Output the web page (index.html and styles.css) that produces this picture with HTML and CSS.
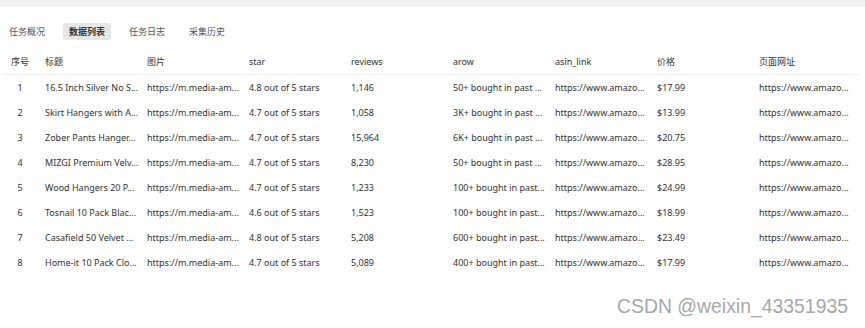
FILE: index.html
```html
<!DOCTYPE html>
<html lang="zh">
<head>
<meta charset="utf-8">
<link rel="stylesheet" href="styles.css">
</head>
<body>
<div class="topbar"></div>
<div class="tabs">
  <span class="tab">任务概况</span>
  <span class="tab active">数据列表</span>
  <span class="tab">任务日志</span>
  <span class="tab">采集历史</span>
</div>
<table class="grid">
  <colgroup>
    <col class="c-idx"><col class="c"><col class="c"><col class="c"><col class="c"><col class="c"><col class="c"><col class="c"><col>
  </colgroup>
  <thead>
    <tr><th class="idx">序号</th><th>标题</th><th>图片</th><th>star</th><th>reviews</th><th>arow</th><th>asin_link</th><th>价格</th><th>页面网址</th></tr>
  </thead>
  <tbody>
    <tr><td class="idx">1</td><td>16.5 Inch Silver No S...</td><td>https://m.media-am...</td><td>4.8 out of 5 stars</td><td>1,146</td><td>50+ bought in past ...</td><td>https://www.amazo...</td><td>$17.99</td><td>https://www.amazo...</td></tr>
    <tr><td class="idx">2</td><td>Skirt Hangers with A...</td><td>https://m.media-am...</td><td>4.7 out of 5 stars</td><td>1,058</td><td>3K+ bought in past ...</td><td>https://www.amazo...</td><td>$13.99</td><td>https://www.amazo...</td></tr>
    <tr><td class="idx">3</td><td>Zober Pants Hanger...</td><td>https://m.media-am...</td><td>4.7 out of 5 stars</td><td>15,964</td><td>6K+ bought in past ...</td><td>https://www.amazo...</td><td>$20.75</td><td>https://www.amazo...</td></tr>
    <tr><td class="idx">4</td><td>MIZGI Premium Velv...</td><td>https://m.media-am...</td><td>4.7 out of 5 stars</td><td>8,230</td><td>50+ bought in past ...</td><td>https://www.amazo...</td><td>$28.95</td><td>https://www.amazo...</td></tr>
    <tr><td class="idx">5</td><td>Wood Hangers 20 P...</td><td>https://m.media-am...</td><td>4.7 out of 5 stars</td><td>1,233</td><td>100+ bought in past...</td><td>https://www.amazo...</td><td>$24.99</td><td>https://www.amazo...</td></tr>
    <tr><td class="idx">6</td><td>Tosnail 10 Pack Blac...</td><td>https://m.media-am...</td><td>4.6 out of 5 stars</td><td>1,523</td><td>100+ bought in past...</td><td>https://www.amazo...</td><td>$18.99</td><td>https://www.amazo...</td></tr>
    <tr><td class="idx">7</td><td>Casafield 50 Velvet ...</td><td>https://m.media-am...</td><td>4.8 out of 5 stars</td><td>5,208</td><td>600+ bought in past...</td><td>https://www.amazo...</td><td>$23.49</td><td>https://www.amazo...</td></tr>
    <tr><td class="idx">8</td><td>Home-it 10 Pack Clo...</td><td>https://m.media-am...</td><td>4.7 out of 5 stars</td><td>5,089</td><td>400+ bought in past...</td><td>https://www.amazo...</td><td>$17.99</td><td>https://www.amazo...</td></tr>
  </tbody>
</table>
<div class="watermark">CSDN @weixin_43351935</div>
</body>
</html>
```
FILE: styles.css
```css
html, body {
  margin: 0;
  padding: 0;
  background: #ffffff;
}
body {
  position: relative;
  width: 865px;
  height: 328px;
  overflow: hidden;
  font-family: "Noto Sans", "Noto Sans CJK SC", sans-serif;
  font-size: 9px;
  color: #333333;
}
.topbar {
  height: 7px;
  background: #f2f2f2;
}
.tabs {
  display: flex;
  gap: 12px;
  padding: 16px 0 0 3px;
}
.tab {
  width: 48px;
  height: 17px;
  line-height: 17px;
  text-align: center;
  border-radius: 3px;
  color: #555555;
}
.tab.active {
  background: #e6e6e6;
  color: #333333;
  font-weight: 600;
}
.grid {
  margin: 8px 0 0 3px;
  width: 857px;
  border-collapse: collapse;
  table-layout: fixed;
}
.grid col.c-idx {
  width: 34px;
}
.grid col.c {
  width: 102px;
}
.grid th,
.grid td {
  padding: 0 0 0 8px;
  text-align: left;
  white-space: nowrap;
  overflow: hidden;
  font-weight: 400;
}
.grid th {
  height: 26px;
  color: #333333;
  border-bottom: 1px solid #f0f0f0;
}
.grid td {
  height: 25px;
}
.grid .idx {
  text-align: center;
  padding: 0;
}
.watermark {
  position: absolute;
  right: 17px;
  bottom: 10px;
  font-family: "Liberation Sans", Arial, sans-serif;
  font-size: 19.4px;
  color: #a8a8a8;
}
```
